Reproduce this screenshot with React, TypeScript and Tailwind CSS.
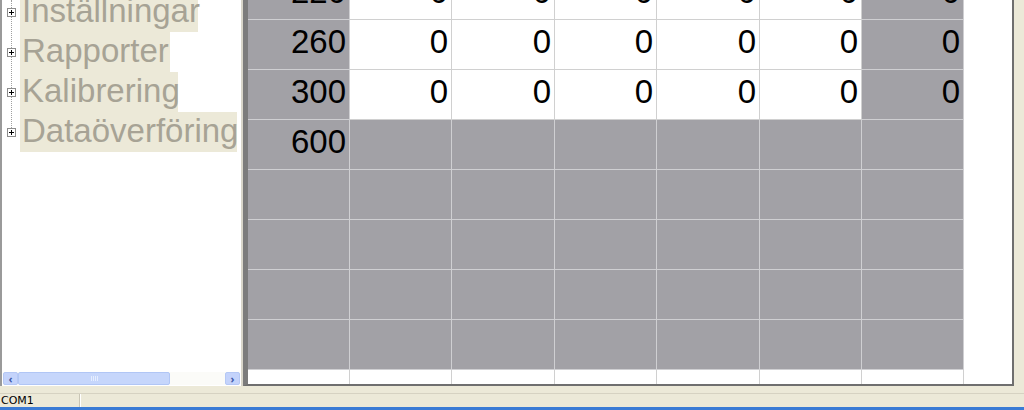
import React from 'react';

const treeItems = [
  { label: 'Inställningar', w: 'w-[178px]' },
  { label: 'Rapporter', w: 'w-[150px]' },
  { label: 'Kalibrering', w: 'w-[158px]' },
  { label: 'Dataöverföring', w: 'w-[217px]' },
];

const colWidths = ['w-[102px]', 'w-[102px]', 'w-[103px]', 'w-[102px]', 'w-[103px]', 'w-[102px]', 'w-[102px]'];

type Row = { label: string; values: number[] | null; white?: boolean };

const rows: Row[] = [
  { label: '220', values: [0, 0, 0, 0, 0, 0] },
  { label: '260', values: [0, 0, 0, 0, 0, 0] },
  { label: '300', values: [0, 0, 0, 0, 0, 0] },
  { label: '600', values: null },
  { label: '', values: null },
  { label: '', values: null },
  { label: '', values: null },
  { label: '', values: null },
  { label: '', values: null, white: true },
];

const PlusBox = () => (
  <div className="relative w-[9px] h-[9px] border border-[#8c8c8c] bg-white flex items-center justify-center">
    <div className="absolute w-[5px] h-px bg-black" />
    <div className="absolute w-px h-[5px] bg-black" />
  </div>
);

const TreePanel = () => (
  <div className="relative w-[241px] h-full bg-white border-l-2 border-[#9a9a9a] overflow-hidden flex flex-col">
    <div className="absolute left-[9px] top-0 h-[128px] border-l border-dotted border-[#a0a0a0]" />
    <div className="flex flex-col -mt-[8px] flex-1">
      {treeItems.map((item) => (
        <div key={item.label} className="h-[40px] flex items-center">
          <div className="w-[18px] flex items-center justify-start pl-[5px]">
            <PlusBox />
          </div>
          <div
            className={`${item.w} h-[40px] bg-[#ece9d8] text-[#a7a395] text-[33px] leading-[38px] pl-[2px] whitespace-nowrap`}
            style={{ fontFamily: '"Liberation Sans", Arial, sans-serif' }}
          >
            {item.label}
          </div>
        </div>
      ))}
    </div>
    <div className="h-[13px] mb-[1px] mx-[1px] flex bg-[#fbfbf8]">
      <div className="w-[15px] h-[13px] rounded-[2px] bg-[#c4d3fb] border border-[#b5c8f5] flex items-center justify-center text-[#3d59a8] text-[11px] font-bold leading-none">
        ‹
      </div>
      <div className="w-[152px] h-[13px] rounded-[2px] bg-[#c6d6fb] border border-[#b1c6f5] flex items-center justify-center">
        <div className="flex gap-[1px]">
          <div className="w-[1px] h-[5px] bg-[#e6eeff]" />
          <div className="w-[1px] h-[5px] bg-[#e6eeff]" />
          <div className="w-[1px] h-[5px] bg-[#e6eeff]" />
          <div className="w-[1px] h-[5px] bg-[#e6eeff]" />
        </div>
      </div>
      <div className="flex-1" />
      <div className="w-[15px] h-[13px] rounded-[2px] bg-[#c4d3fb] border border-[#b5c8f5] flex items-center justify-center text-[#3d59a8] text-[11px] font-bold leading-none">
        ›
      </div>
    </div>
  </div>
);

const Cell = ({ w, gray, text }: { w: string; gray: boolean; text?: string }) => (
  <div
    className={`${w} h-[50px] shrink-0 border-r border-b ${
      gray ? 'bg-[#a2a1a6] border-[#cfcfd2]' : 'bg-white border-[#d0d0d0]'
    } flex items-center justify-end pr-[3px] pb-[7px] text-black text-[33px] leading-none`}
    style={{ fontFamily: '"Liberation Sans", Arial, sans-serif' }}
  >
    {text}
  </div>
);

const GridPanel = () => (
  <div className="flex-1 h-full bg-white border-l-[5px] border-l-[#7c7c7c] border-b-2 border-b-[#6f6f6f] border-r-2 border-r-[#6f6f6f] overflow-hidden">
    <div className="flex flex-col -mt-[30px]">
      {rows.map((row, i) => (
        <div key={i} className="flex">
          <Cell w={colWidths[0]} gray={!row.white} text={row.label} />
          {colWidths.slice(1).map((w, j) => {
            const gray = row.white ? false : row.values === null || j === 5;
            return <Cell key={j} w={w} gray={gray} text={row.values ? String(row.values[j]) : undefined} />;
          })}
        </div>
      ))}
    </div>
  </div>
);

export default function App() {
  return (
    <div className="w-[1024px] h-[410px] bg-[#ece9d8] flex flex-col overflow-hidden">
      <div className="h-[386px] flex pr-[10px]">
        <TreePanel />
        <div className="w-[2px] h-full bg-[#d9d6ca]" />
        <GridPanel />
      </div>
      <div className="h-[8px] border-b border-[#d6d2c2]" />
      <div
        className="h-[13px] flex text-[11px] leading-[13px] text-black"
        style={{ fontFamily: 'Tahoma, "DejaVu Sans", sans-serif' }}
      >
        <div className="w-[80px] pl-[1px] border-r border-[#c9c5b5]">COM1</div>
        <div className="flex-1 border-l border-white" />
      </div>
      <div className="h-[3px] bg-[#3a7bd5]" />
    </div>
  );
}
